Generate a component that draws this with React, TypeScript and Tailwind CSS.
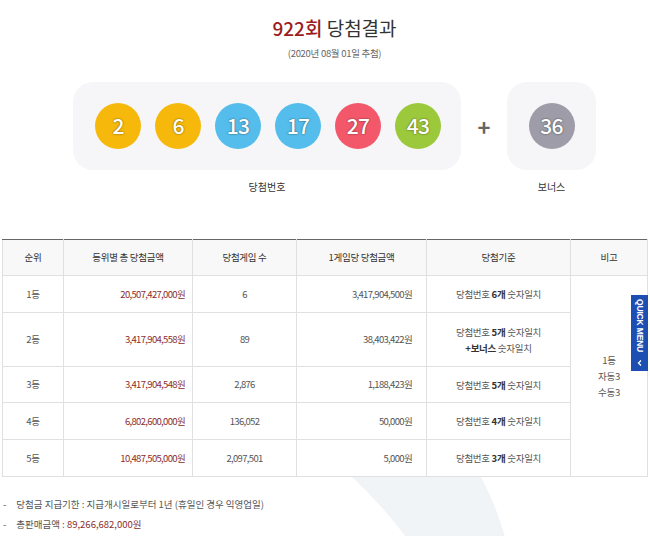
import React from "react";

const FONT = { fontFamily: '"Noto Sans CJK KR", "Noto Sans", sans-serif' };

interface Ball {
  n: number;
  color: string;
}

const balls: Ball[] = [
  { n: 2, color: "bg-[#f6b90b]" },
  { n: 6, color: "bg-[#f6b90b]" },
  { n: 13, color: "bg-[#55bdeb]" },
  { n: 17, color: "bg-[#55bdeb]" },
  { n: 27, color: "bg-[#f3586a]" },
  { n: 43, color: "bg-[#9cc83c]" },
];

interface Row {
  rank: string;
  total: string;
  count: string;
  each: string;
  match: React.ReactNode;
  h: string;
}

const rows: Row[] = [
  {
    rank: "1등",
    total: "20,507,427,000원",
    count: "6",
    each: "3,417,904,500원",
    match: (
      <>
        당첨번호 <b className="font-bold text-[#333]">6개</b> 숫자일치
      </>
    ),
    h: "h-[37px]",
  },
  {
    rank: "2등",
    total: "3,417,904,558원",
    count: "89",
    each: "38,403,422원",
    match: (
      <>
        당첨번호 <b className="font-bold text-[#333]">5개</b> 숫자일치
        <br />
        <b className="font-bold text-[#333]">+보너스</b> 숫자일치
      </>
    ),
    h: "h-[54px]",
  },
  {
    rank: "3등",
    total: "3,417,904,548원",
    count: "2,876",
    each: "1,188,423원",
    match: (
      <>
        당첨번호 <b className="font-bold text-[#333]">5개</b> 숫자일치
      </>
    ),
    h: "h-[36px]",
  },
  {
    rank: "4등",
    total: "6,802,600,000원",
    count: "136,052",
    each: "50,000원",
    match: (
      <>
        당첨번호 <b className="font-bold text-[#333]">4개</b> 숫자일치
      </>
    ),
    h: "h-[37px]",
  },
  {
    rank: "5등",
    total: "10,487,505,000원",
    count: "2,097,501",
    each: "5,000원",
    match: (
      <>
        당첨번호 <b className="font-bold text-[#333]">3개</b> 숫자일치
      </>
    ),
    h: "h-[37px]",
  },
];

function LottoBall({ n, color }: Ball) {
  return (
    <div
      className={`w-[46px] h-[46px] rounded-full ${color} flex items-center justify-center text-white text-[21px] font-medium tracking-[-0.04em] [text-shadow:0_0_2px_rgba(0,0,0,0.6)]`}
    >
      {n}
    </div>
  );
}

export default function App() {
  return (
    <div className="relative w-[650px] h-[536px] bg-white overflow-hidden text-[#555]" style={FONT}>
      {/* header */}
      <div className="flex flex-col items-center pl-[19px] pt-[15px]">
        <h2 className="text-[19px] leading-[26px] text-[#333] font-normal">
          <span className="text-[#9b1c1c] font-medium">922회</span> 당첨결과
        </h2>
        <p className="mt-[5px] text-[9.5px] leading-[14px] text-[#666] tracking-[-0.03em]">
          (2020년 08월 01일 추첨)
        </p>
      </div>

      {/* balls */}
      <div className="flex justify-center pl-[19px] mt-[22px]">
        <div className="flex flex-col items-center">
          <div className="w-[388px] h-[88px] rounded-[20px] bg-[#f6f6f8] flex items-center pl-[22px] gap-[14px]">
            {balls.map((b) => (
              <LottoBall key={b.n} {...b} />
            ))}
          </div>
          <span className="mt-[10px] text-[10px] leading-[14px] text-[#333]">당첨번호</span>
        </div>
        <div className="w-[46px] h-[88px] flex items-center justify-center">
          <span className="text-[22px] leading-none font-bold text-[#666]">+</span>
        </div>
        <div className="flex flex-col items-center">
          <div className="w-[89px] h-[88px] rounded-[20px] bg-[#f6f6f8] flex items-center justify-center">
            <LottoBall n={36} color="bg-[#9d9ca8]" />
          </div>
          <span className="mt-[10px] text-[10px] leading-[14px] text-[#333]">보너스</span>
        </div>
      </div>

      {/* table */}
      <div className="relative mt-[45px] pl-[2px] pr-[3px]">
        <table className="w-[645px] border-collapse table-fixed text-[9.5px] tracking-[-0.03em] bg-white">
          <colgroup>
            <col className="w-[61px]" />
            <col className="w-[129px]" />
            <col className="w-[104px]" />
            <col className="w-[130px]" />
            <col className="w-[144px]" />
            <col className="w-[77px]" />
          </colgroup>
          <thead>
            <tr className="h-[36px] bg-[#f8f8f8] text-[#333]">
              <th className="font-normal border border-[#e0e0e0] border-t-[#666]">순위</th>
              <th className="font-normal border border-[#e0e0e0] border-t-[#666]">등위별 총 당첨금액</th>
              <th className="font-normal border border-[#e0e0e0] border-t-[#666]">당첨게임 수</th>
              <th className="font-normal border border-[#e0e0e0] border-t-[#666]">1게임당 당첨금액</th>
              <th className="font-normal border border-[#e0e0e0] border-t-[#666]">당첨기준</th>
              <th className="font-normal border border-[#e0e0e0] border-t-[#666]">비고</th>
            </tr>
          </thead>
          <tbody>
            {rows.map((r, i) => (
              <tr key={r.rank} className={r.h}>
                <td className="border border-[#e0e0e0] text-center">{r.rank}</td>
                <td className="border border-[#e0e0e0] text-right pr-[7px] text-[#8a2e2e] tracking-[-0.07em]">
                  {r.total}
                </td>
                <td className="border border-[#e0e0e0] text-center tracking-[-0.07em]">{r.count}</td>
                <td className="border border-[#e0e0e0] text-right pr-[14px] tracking-[-0.07em]">{r.each}</td>
                <td className="border border-[#e0e0e0] text-center leading-[16px]">{r.match}</td>
                {i === 0 && (
                  <td rowSpan={5} className="border border-[#e0e0e0] text-center leading-[16px]">
                    1등
                    <br />
                    자동3
                    <br />
                    수동3
                  </td>
                )}
              </tr>
            ))}
          </tbody>
        </table>

        {/* quick menu tab */}
        <div className="absolute right-[2px] top-[56px] w-[17px] h-[76px] bg-[#1d4fb3] flex flex-col items-center justify-between pt-[4px] pb-[4px]">
          <span
            className="[writing-mode:vertical-rl] text-white text-[8.5px] font-bold leading-none tracking-[-0.02em]"
            style={{ fontFamily: '"Liberation Sans", sans-serif' }}
          >
            QUICK MENU
          </span>
          <svg width="8" height="8" viewBox="0 0 8 8">
            <path d="M5 1.5 L2.5 4 L5 6.5" stroke="white" strokeWidth="1.3" fill="none" />
          </svg>
        </div>
      </div>

      {/* footer */}
      <div className="relative h-[60px]">
        <svg className="absolute left-0 top-0" width="650" height="60" viewBox="0 0 650 60">
          <path d="M352 0 L481 0 Q496 28 505 60 L406 60 Q382 28 352 0 Z" fill="#f0f4f6" />
        </svg>
        <div className="relative pl-[3px] pt-[17px] text-[9.5px] leading-[20px] text-[#555]">
          <p>
            <span className="mr-[10px]">-</span>당첨금 지급기한 : 지급개시일로부터 1년 (휴일인 경우 익영업일)
          </p>
          <p>
            <span className="mr-[10px]">-</span>총판매금액 : <span className="text-[#8a2e2e]">89,266,682,000원</span>
          </p>
        </div>
      </div>
    </div>
  );
}
